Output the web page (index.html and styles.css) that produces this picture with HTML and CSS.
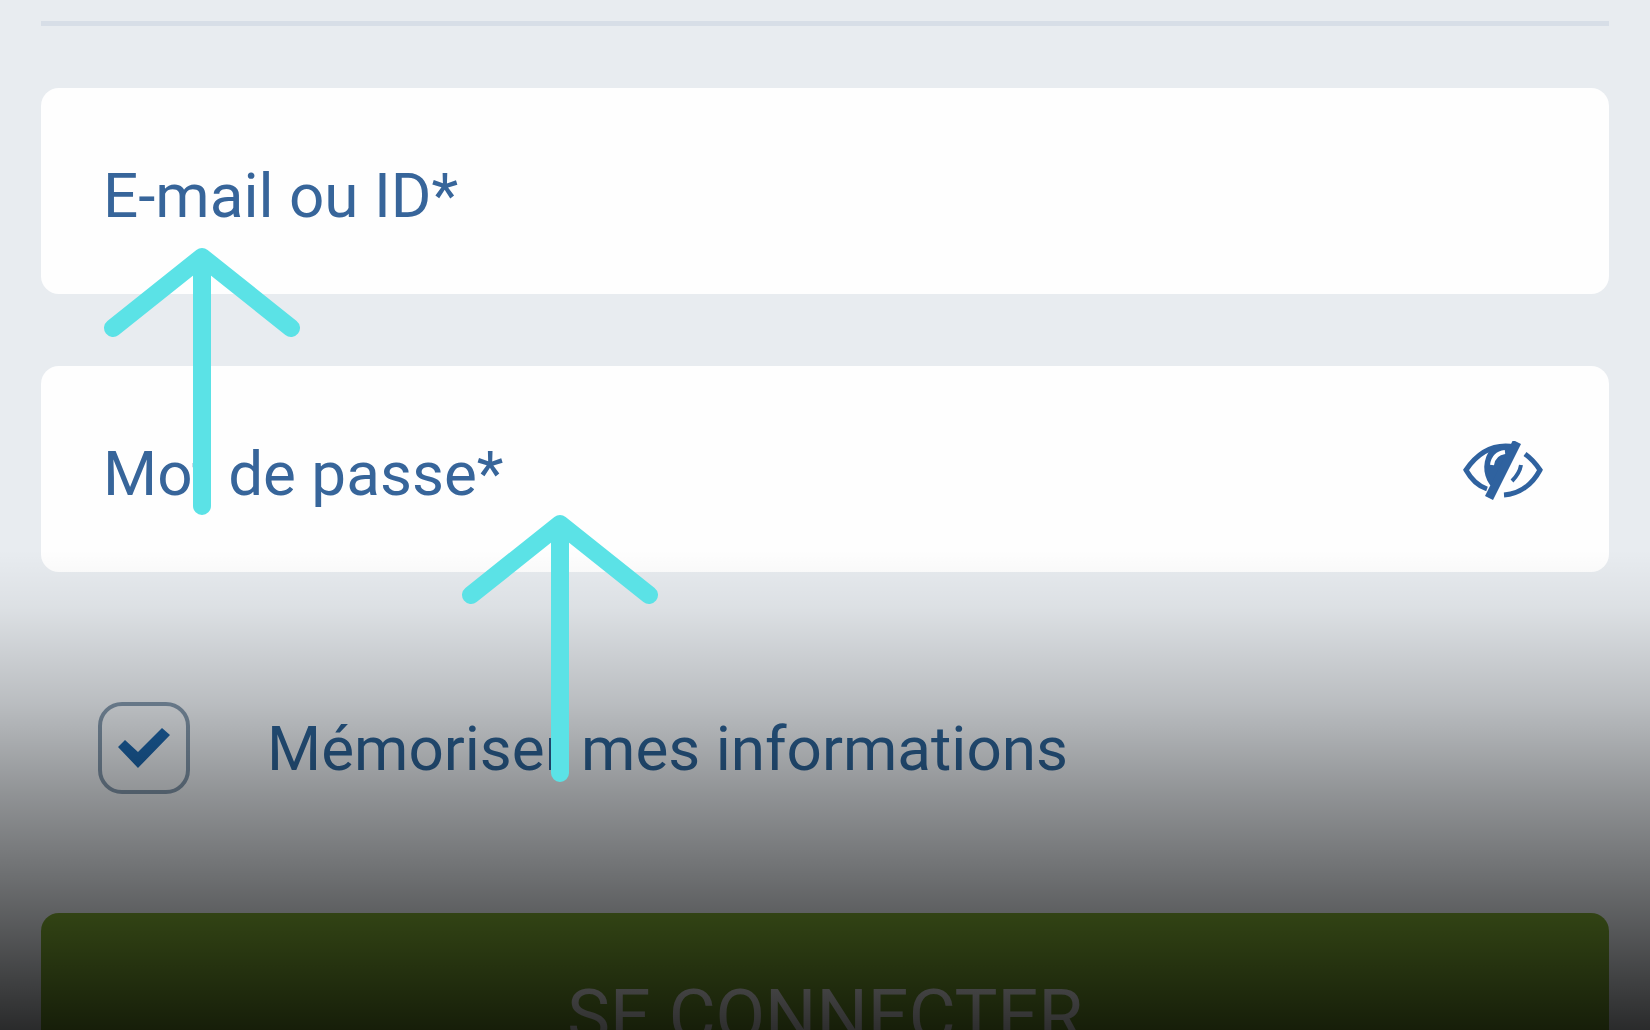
FILE: index.html
```html
<!DOCTYPE html>
<html lang="fr">
<head>
    <meta charset="UTF-8">
    <meta name="viewport" content="width=device-width, initial-scale=1.0">
    <title>Connexion</title>
    <link rel="stylesheet" href="styles.css">
</head>
<body>
    <form class="login">
        <hr class="divider">

        <div class="field">
            <label for="email">E-mail ou ID*</label>
            <input type="text" id="email">
        </div>

        <div class="field">
            <label for="password">Mot de passe*</label>
            <input type="password" id="password">
            <button type="button" class="toggle" aria-label="Afficher le mot de passe">
                <svg width="80" height="64" viewBox="0 0 80 64" fill="none" stroke="#2f629f" stroke-width="5">
                    <path d="M52 6C36 3 18 7 3 29C8 38 15 45 24 48"/>
                    <path d="M27 44C19 33 19 18 29 6L52 6L31 46Z" fill="#2f629f" stroke="none"/>
                    <path d="M29 24C30 17 34 12 42 11" stroke="#fff" stroke-width="4"/>
                    <path d="M54 1L26 57" stroke-width="9"/>
                    <path d="M58 24C57 30 54 35 49 40" stroke-width="4"/>
                    <path d="M62 13C69 18 73 23 77 29C69 44 56 53 41 54"/>
                </svg>
            </button>
        </div>

        <div class="remember">
            <input type="checkbox" id="remember" checked>
            <label for="remember">Mémoriser mes informations</label>
        </div>

        <button type="submit" class="submit">SE CONNECTER</button>
    </form>

    <div class="fade"></div>

    <svg class="arrow arrow-email" width="200" height="280" viewBox="0 0 200 280">
        <path d="M11 91L100 20L189 91M100 20V269"/>
    </svg>
    <svg class="arrow arrow-password" width="200" height="280" viewBox="0 0 200 280">
        <path d="M11 91L100 20L189 91M100 20V269"/>
    </svg>
</body>
</html>
```

FILE: styles.css
```css
* {
    box-sizing: border-box;
}
body {
    position: relative;
    height: 100vh;
    margin: 0;
    overflow: hidden;
    background-color: #e8ecf0;
    font-family: Roboto, "Liberation Sans", sans-serif;
    font-size: 62px;
    color: #37659a;
}
.login {
    display: flex;
    flex-direction: column;
    padding: 21px 41px 0;
}
.divider {
    width: 100%;
    height: 5px;
    margin: 0 0 62px;
    border: none;
    background-color: #d7dee7;
}
.field {
    display: flex;
    align-items: center;
    height: 206px;
    margin-bottom: 72px;
    padding: 8px 66px 0 62px;
    border-radius: 18px;
    background-color: #fefefe;
}
.field input {
    flex: 1;
    min-width: 0;
    border: none;
    outline: none;
    background: none;
    font: inherit;
    color: inherit;
}
.toggle {
    display: flex;
    padding: 0;
    border: none;
    background: none;
    cursor: pointer;
}
.remember {
    display: flex;
    align-items: center;
    gap: 77px;
    margin: 58px 57px 119px;
    color: #2b6093;
}
.remember input {
    appearance: none;
    display: grid;
    place-items: center;
    width: 92px;
    height: 92px;
    margin: 0;
    border: 4px solid #8095a9;
    border-radius: 24px;
}
.remember input:checked::before {
    content: "";
    width: 52px;
    height: 40px;
    background-color: #1c64a8;
    clip-path: polygon(0 19px, 7px 12px, 20px 24px, 44px 0, 52px 7px, 20px 40px);
}
.submit {
    height: 206px;
    padding: 0;
    border: none;
    border-radius: 18px;
    background-color: #7ba632;
    font: inherit;
    font-size: 72px;
    color: #fff;
    cursor: pointer;
}
.fade {
    position: absolute;
    right: 0;
    bottom: 0;
    left: 0;
    height: 480px;
    background: linear-gradient(rgba(0, 0, 0, 0), rgba(0, 0, 0, 0.05) 12%, rgba(0, 0, 0, 0.2) 32%, rgba(0, 0, 0, 0.38) 51%, rgba(0, 0, 0, 0.6) 76%, rgba(0, 0, 0, 0.82));
    pointer-events: none;
}
.arrow {
    position: absolute;
    fill: none;
    stroke: #5be2e6;
    stroke-width: 18px;
    stroke-linecap: round;
    stroke-linejoin: round;
    pointer-events: none;
}
.arrow-email {
    top: 237px;
    left: 102px;
}
.arrow-password {
    top: 504px;
    left: 460px;
}
```
